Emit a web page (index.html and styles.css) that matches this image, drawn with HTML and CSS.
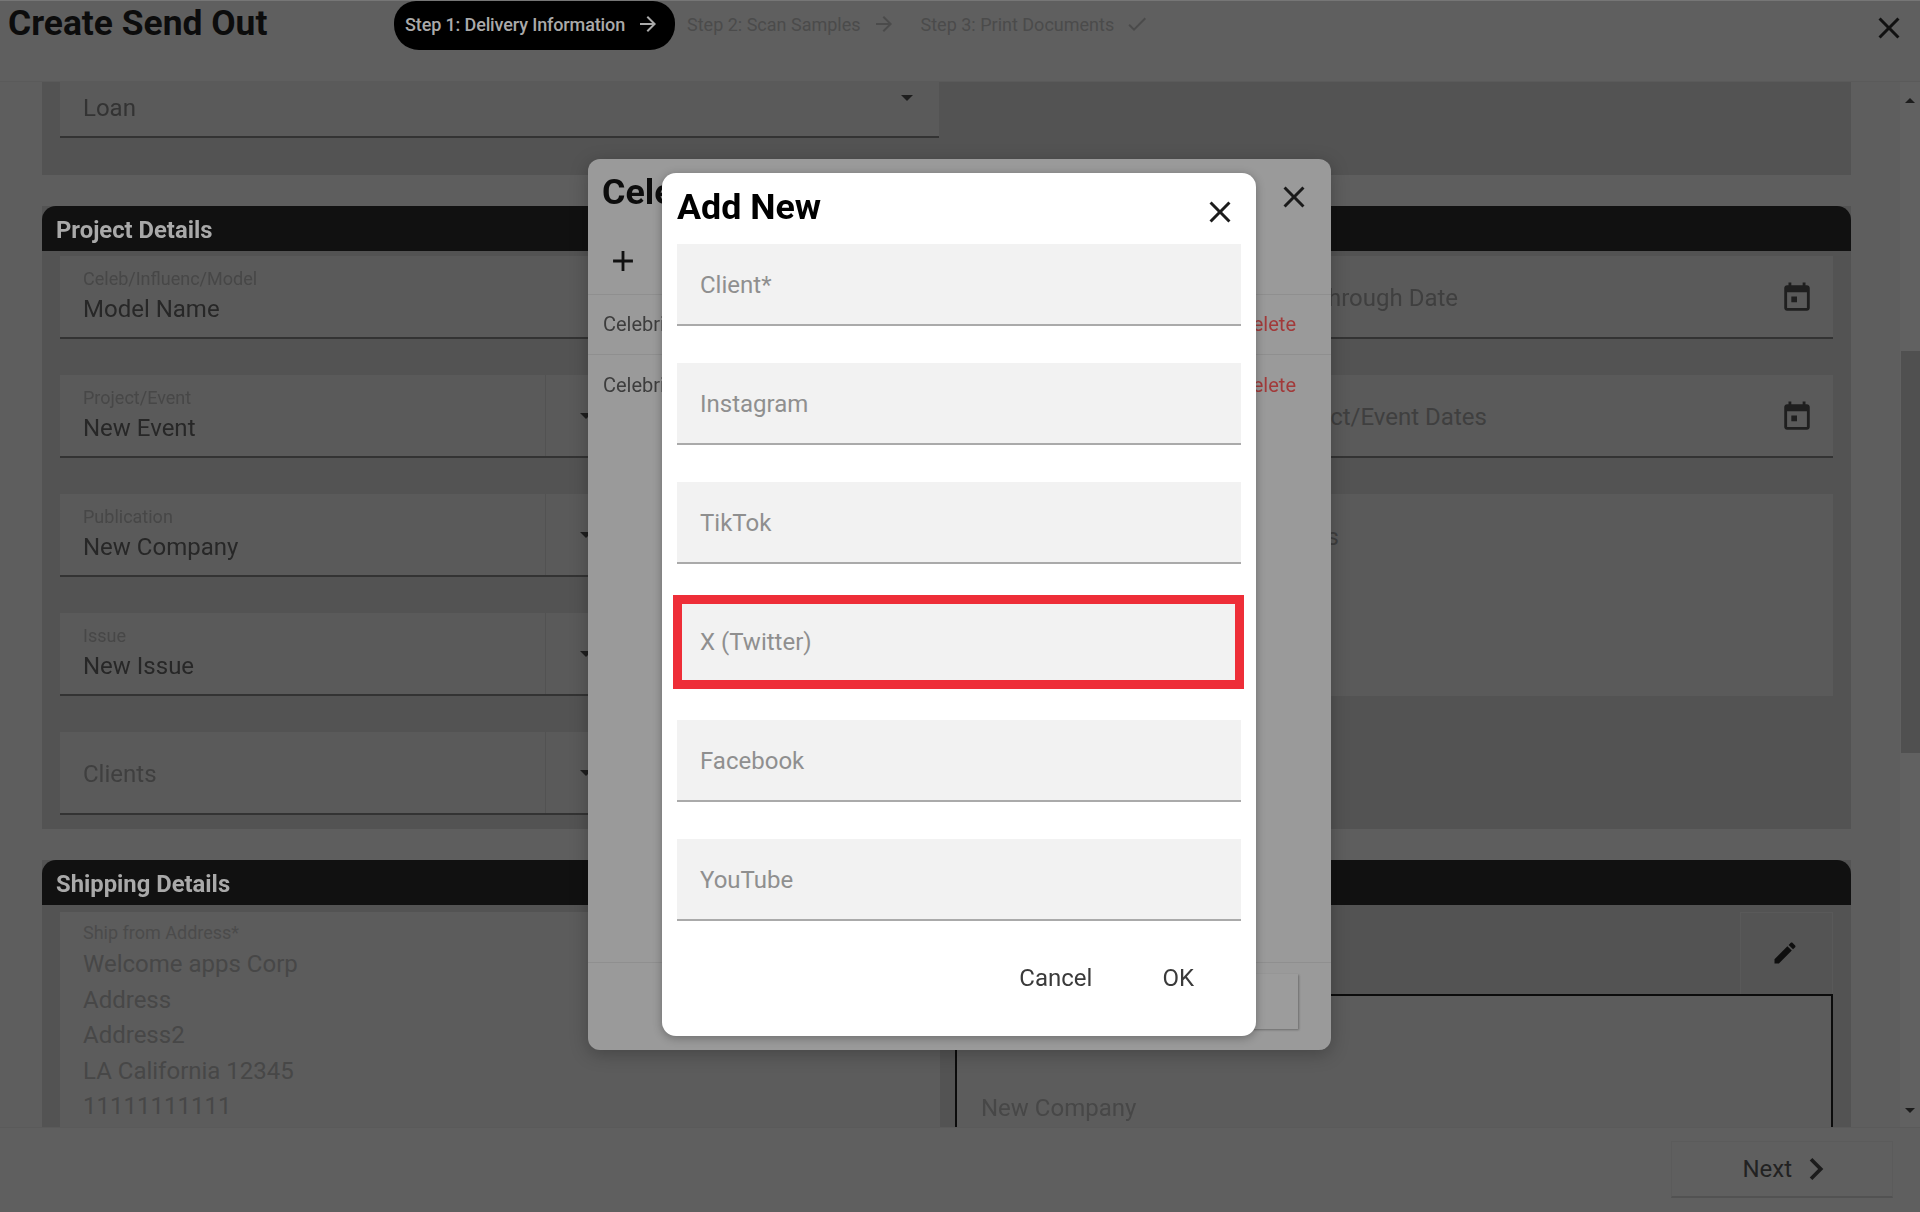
FILE: index.html
```html
<!DOCTYPE html>
<html lang="en">
<head>
    <meta charset="UTF-8">
    <title>Create Send Out</title>
    <link rel="stylesheet" href="styles.css">
</head>
<body>

<svg class="icon-defs" width="0" height="0">
    <symbol id="i-close" viewBox="0 0 24 24"><path d="M19 6.41L17.59 5 12 10.59 6.41 5 5 6.41 10.59 12 5 17.59 6.41 19 12 13.41 17.59 19 19 17.59 13.41 12z"/></symbol>
    <symbol id="i-arrow" viewBox="0 0 24 24"><path d="M12 4l-1.41 1.41L16.17 11H4v2h12.17l-5.58 5.59L12 20l8-8z"/></symbol>
    <symbol id="i-check" viewBox="0 0 24 24"><path d="M9 16.17L4.83 12l-1.42 1.41L9 19 21 7l-1.41-1.41z"/></symbol>
    <symbol id="i-plus" viewBox="0 0 24 24"><path d="M19 13h-6v6h-2v-6H5v-2h6V5h2v6h6v2z"/></symbol>
    <symbol id="i-date" viewBox="0 0 24 24"><path d="M19 3h-1V1h-2v2H8V1H6v2H5c-1.11 0-2 .9-2 2v14c0 1.1.89 2 2 2h14c1.1 0 2-.9 2-2V5c0-1.1-.9-2-2-2zm0 16H5V8h14v11zM8 11h4v4H8z"/></symbol>
    <symbol id="i-edit" viewBox="0 0 24 24"><path d="M3 17.25V21h3.75L17.81 9.94l-3.75-3.75L3 17.25zM20.71 7.04c.39-.39.39-1.02 0-1.41l-2.34-2.34c-.39-.39-1.02-.39-1.41 0l-1.83 1.83 3.75 3.75 1.83-1.83z"/></symbol>
    <symbol id="i-next" viewBox="0 0 24 24"><path d="M10 6L8.59 7.41 13.17 12l-4.58 4.59L10 18l6-6z"/></symbol>
</svg>

<div class="app">
    <header class="top-bar">
        <h1 class="page-title">Create Send Out</h1>
        <div class="steps">
            <div class="step active">Step 1: Delivery Information <svg class="step-icon"><use href="#i-arrow"/></svg></div>
            <div class="step">Step 2: Scan Samples <svg class="step-icon"><use href="#i-arrow"/></svg></div>
            <div class="step">Step 3: Print Documents <svg class="step-icon"><use href="#i-check"/></svg></div>
        </div>
        <svg class="page-close"><use href="#i-close"/></svg>
    </header>

    <main class="scroll-wrap">
        <div class="content">
            <section class="panel panel-loan">
                <div class="field field-loan">
                    <span class="value">Loan</span>
                    <span class="caret"></span>
                </div>
            </section>

            <section class="panel">
                <h2 class="panel-head">Project Details</h2>
                <div class="project-grid">
                    <div class="project-col">
                        <div class="field"><div class="field-text"><span class="label">Celeb/Influenc/Model</span><span class="value">Model Name</span></div></div>
                        <div class="field select"><div class="field-text"><span class="label">Project/Event</span><span class="value">New Event</span></div><div class="select-side"><span class="caret"></span></div></div>
                        <div class="field select"><div class="field-text"><span class="label">Publication</span><span class="value">New Company</span></div><div class="select-side"><span class="caret"></span></div></div>
                        <div class="field select"><div class="field-text"><span class="label">Issue</span><span class="value">New Issue</span></div><div class="select-side"><span class="caret"></span></div></div>
                        <div class="field select"><div class="field-text field-plain"><span class="value muted">Clients</span></div><div class="select-side"><span class="caret"></span></div></div>
                    </div>
                    <div class="project-col"></div>
                    <div class="project-col">
                        <div class="field date"><span class="value muted">Try Through Date</span><svg class="date-icon"><use href="#i-date"/></svg></div>
                        <div class="field date"><span class="value muted">Project/Event Dates</span><svg class="date-icon"><use href="#i-date"/></svg></div>
                        <div class="field notes"><span class="value muted">Notes</span></div>
                    </div>
                </div>
            </section>

            <section class="panel panel-ship">
                <h2 class="panel-head">Shipping Details</h2>
                <div class="ship-grid">
                    <div class="ship-from">
                        <span class="label">Ship from Address*</span>
                        <p>Welcome apps Corp</p>
                        <p>Address</p>
                        <p>Address2</p>
                        <p>LA California 12345</p>
                        <p>11111111111</p>
                    </div>
                    <div class="ship-to">
                        <div class="ship-to-bar">
                            <div class="edit-btn"><svg class="edit-icon"><use href="#i-edit"/></svg></div>
                        </div>
                        <div class="ship-to-box">New Company</div>
                    </div>
                </div>
            </section>
        </div>

        <div class="scrollbar">
            <span class="sb-up"></span>
            <span class="sb-thumb"></span>
            <span class="sb-down"></span>
        </div>
    </main>

    <footer class="bottom-bar">
        <button class="next-btn">Next <svg class="next-icon"><use href="#i-next"/></svg></button>
    </footer>
</div>

<!-- first dialog, behind the add form -->
<div class="dialog-list">
    <h2 class="dialog-title">Celebrities</h2>
    <svg class="dialog-close"><use href="#i-close"/></svg>
    <svg class="add-icon"><use href="#i-plus"/></svg>
    <div class="list-row"><span>Celebrity One</span><span class="del">Delete</span></div>
    <div class="list-row"><span>Celebrity Two</span><span class="del">Delete</span></div>
    <div class="dialog-foot"><span class="foot-btn"></span></div>
</div>

<!-- add form -->
<div class="dialog-add">
    <div class="add-head">
        <h2 class="dialog-title">Add New</h2>
        <svg class="add-close"><use href="#i-close"/></svg>
    </div>
    <div class="add-fields">
        <div class="add-field">Client*</div>
        <div class="add-field">Instagram</div>
        <div class="add-field">TikTok</div>
        <div class="add-field marked">X (Twitter)<span class="red-box"></span></div>
        <div class="add-field">Facebook</div>
        <div class="add-field">YouTube</div>
    </div>
    <div class="add-actions">
        <button class="text-btn">Cancel</button>
        <button class="text-btn">OK</button>
    </div>
</div>

</body>
</html>
```

FILE: styles.css
```css
* {
    box-sizing: border-box;
}

body {
    margin: 0;
    font-family: Roboto, 'Liberation Sans', sans-serif;
    background-color: #5e5e5e;
    overflow: hidden;
    filter: blur(0.6px);
}

h1, h2, p {
    margin: 0;
}

.icon-defs {
    position: absolute;
}

.app {
    display: flex;
    flex-direction: column;
    height: 1212px;
}

/* top bar */
.top-bar {
    display: flex;
    align-items: flex-start;
    height: 82px;
    padding-left: 8px;
    background-color: #5f5f5f;
    border-top: 1px solid #767676;
    border-bottom: 1px solid #5a5a5a;
    flex: none;
}

.page-title {
    width: 386px;
    font-size: 35.4px;
    line-height: 45px;
    font-weight: 700;
    color: #0c0c0c;
}

.steps {
    display: flex;
    align-items: center;
    height: 49px;
}

.step {
    display: flex;
    align-items: center;
    gap: 11px;
    margin-left: 12px;
    margin-right: 13px;
    padding-bottom: 3px;
    font-size: 18px;
    color: #4b4b4b;
    white-space: nowrap;
}

.step.active {
    height: 49px;
    margin: 0;
    padding: 0 15px 3px 11px;
    border-radius: 22px 22px 25px 25px;
    background-color: #000;
    color: #aaa;
    font-weight: 500;
    letter-spacing: -0.13px;
}

.step-icon {
    width: 24px;
    height: 24px;
    fill: currentColor;
}

.page-close {
    width: 36px;
    height: 36px;
    margin: 9px 13px 0 auto;
    fill: #111;
}

/* scrolling part */
.scroll-wrap {
    display: flex;
    flex: 1;
    min-height: 0;
}

.content {
    flex: 1;
    padding: 0 49px 0 42px;
    overflow: hidden;
}

.panel {
    background-color: #535353;
    margin-bottom: 31px;
}

.panel-loan {
    height: 93px;
    padding: 0 18px;
}

.panel-head {
    height: 45px;
    padding: 0 14px;
    background-color: #111;
    border-radius: 14px 14px 0 0;
    color: #a9a9a9;
    font-size: 23.8px;
    line-height: 49px;
    font-weight: 700;
    overflow: hidden;
}

.field {
    display: flex;
    height: 83px;
    padding-left: 23px;
    background-color: #5a5a5a;
    border-bottom: 2px solid #333;
}

.field-text {
    display: flex;
    flex-direction: column;
    justify-content: center;
    flex: none;
    width: 462px;
}

.field-plain {
    padding-top: 2px;
}

.label {
    display: block;
    margin-bottom: 3px;
    font-size: 18px;
    line-height: 22px;
    color: #474747;
}

.value {
    font-size: 24px;
    line-height: 32px;
    color: #272727;
}

.value.muted {
    color: #3f3f3f;
}

.field-loan {
    width: 879px;
    height: 56px;
    padding-top: 10px;
}

.field-loan .value {
    color: #333;
}

.field-loan .caret {
    margin: 3px 26px 0 auto;
}

.caret {
    width: 0;
    height: 0;
    border-left: 6px solid transparent;
    border-right: 6px solid transparent;
    border-top: 6px solid #1e1e1e;
}

.project-grid {
    display: grid;
    grid-template-columns: 565px 1fr 582px;
    column-gap: 15px;
    height: 578px;
    padding: 5px 18px 0;
}

.project-col {
    display: flex;
    flex-direction: column;
    gap: 36px;
}

.select-side {
    display: flex;
    align-items: center;
    justify-content: center;
    flex: 1;
    border-left: 1px solid #525252;
}

.date {
    align-items: center;
    justify-content: space-between;
    padding-left: 24px;
    padding-top: 2px;
}

.date-icon {
    width: 34px;
    height: 34px;
    margin-right: 19px;
    fill: #1f1f1f;
}

.notes {
    height: 202px;
    padding-left: 24px;
    padding-top: 27px;
    border-bottom: none;
}

.panel-ship {
    margin-bottom: 0;
}

.ship-grid {
    display: grid;
    grid-template-columns: 880px 878px;
    column-gap: 15px;
    padding: 7px 18px 0;
}

.ship-from {
    height: 300px;
    padding: 10px 23px 0;
    background-color: #5c5c5c;
}

.ship-from .label {
    color: #4b4b4b;
}

.ship-from p {
    font-size: 24px;
    line-height: 35.5px;
    color: #474747;
}

.ship-to-bar {
    display: flex;
    justify-content: flex-end;
    height: 82px;
}

.edit-btn {
    display: flex;
    align-items: center;
    justify-content: center;
    width: 93px;
    padding: 0 4px 2px 0;
    background-color: #545454;
    border: 1px solid #595959;
    border-bottom: none;
}

.edit-icon {
    width: 28px;
    height: 28px;
    fill: #0e0e0e;
}

.ship-to-box {
    height: 300px;
    padding: 98px 24px 0;
    background-color: #5c5c5c;
    border: 2px solid #0c0c0c;
    font-size: 24px;
    color: #474747;
}

/* scrollbar */
.scrollbar {
    position: relative;
    width: 20px;
    background-color: #616161;
    flex: none;
}

.sb-up, .sb-down {
    position: absolute;
    left: 5px;
    width: 0;
    height: 0;
    border-left: 5px solid transparent;
    border-right: 5px solid transparent;
}

.sb-up {
    top: 16px;
    border-bottom: 5px solid #1c1c1c;
}

.sb-down {
    bottom: 14px;
    border-top: 5px solid #1c1c1c;
}

.sb-thumb {
    position: absolute;
    top: 269px;
    left: 1px;
    right: 0;
    height: 402px;
    background-color: #505050;
}

/* bottom bar */
.bottom-bar {
    display: flex;
    justify-content: flex-end;
    height: 85px;
    padding: 13px 27px 0 0;
    background-color: #5f5f5f;
    border-top: 1px solid #5a5a5a;
    flex: none;
}

.next-btn {
    display: flex;
    align-items: center;
    justify-content: flex-end;
    gap: 2px;
    width: 222px;
    height: 57px;
    padding: 0 68px 0 0;
    border: 1px solid #5b5b5b;
    border-bottom: 2px solid #525252;
    background-color: #5f5f5f;
    color: #222;
    font: 24px Roboto, sans-serif;
}

.next-icon {
    width: 44px;
    height: 44px;
    fill: #1c1c1c;
    margin-right: -14px;
}

/* first dialog */
.dialog-list {
    position: absolute;
    top: 159px;
    left: 588px;
    width: 743px;
    height: 891px;
    padding-top: 135px;
    background-color: #9a9a9a;
    border-radius: 12px;
    box-shadow: 0 4px 18px rgba(0, 0, 0, 0.25);
}

.dialog-title {
    font-size: 35.8px;
    line-height: 46px;
    font-weight: 700;
    color: #000;
}

.dialog-list > .dialog-title {
    position: absolute;
    top: 10px;
    left: 14px;
    width: 60px;
    overflow: hidden;
    white-space: nowrap;
    color: #0d0d0d;
}

.dialog-close {
    position: absolute;
    top: 20px;
    right: 19px;
    width: 36px;
    height: 36px;
    fill: #1a1a1a;
}

.add-icon {
    position: absolute;
    top: 85px;
    left: 18px;
    width: 34px;
    height: 34px;
    fill: #111;
}

.list-row {
    display: flex;
    justify-content: space-between;
    align-items: center;
    height: 60px;
    padding: 0 35px 2px 15px;
    border-top: 1px solid #8f8f8f;
    font-size: 20px;
    color: #3d3d3d;
}

.list-row + .list-row {
    padding-bottom: 0;
}

.del {
    color: #a23a3a;
}

.dialog-foot {
    position: absolute;
    left: 0;
    right: 0;
    bottom: 0;
    height: 88px;
    padding: 11px 33px 0 0;
    border-top: 1px solid #8f8f8f;
    display: flex;
    justify-content: flex-end;
}

.foot-btn {
    width: 120px;
    height: 55px;
    background-color: #9c9c9c;
    box-shadow: 1px 1px 2px rgba(0, 0, 0, 0.3);
}

/* add form */
.dialog-add {
    position: absolute;
    top: 173px;
    left: 662px;
    width: 594px;
    height: 863px;
    padding: 0 15px;
    background-color: #fff;
    border-radius: 14px;
    box-shadow: 0 2px 10px rgba(0, 0, 0, 0.3);
}

.add-head {
    display: flex;
    justify-content: space-between;
    align-items: flex-start;
    height: 71px;
    padding-top: 11px;
}

.add-close {
    width: 36px;
    height: 36px;
    margin: 10px 3px 0 0;
    fill: #1c1c1c;
}

.add-fields {
    display: flex;
    flex-direction: column;
    gap: 37px;
}

.add-field {
    position: relative;
    height: 82px;
    padding-left: 23px;
    background-color: #f2f2f2;
    border-bottom: 2px solid #aaa;
    font-size: 24px;
    line-height: 83px;
    color: #8f8f8f;
}

.red-box {
    position: absolute;
    top: -6px;
    left: -4px;
    right: -3px;
    bottom: -8px;
    border: 9px solid #ee2e38;
}

.add-actions {
    display: flex;
    justify-content: flex-end;
    gap: 46px;
    padding: 35px 35px 0 0;
}

.text-btn {
    padding: 8px 12px;
    border: none;
    background: none;
    color: #3a3a3a;
    font: 24px Roboto, sans-serif;
}
```
